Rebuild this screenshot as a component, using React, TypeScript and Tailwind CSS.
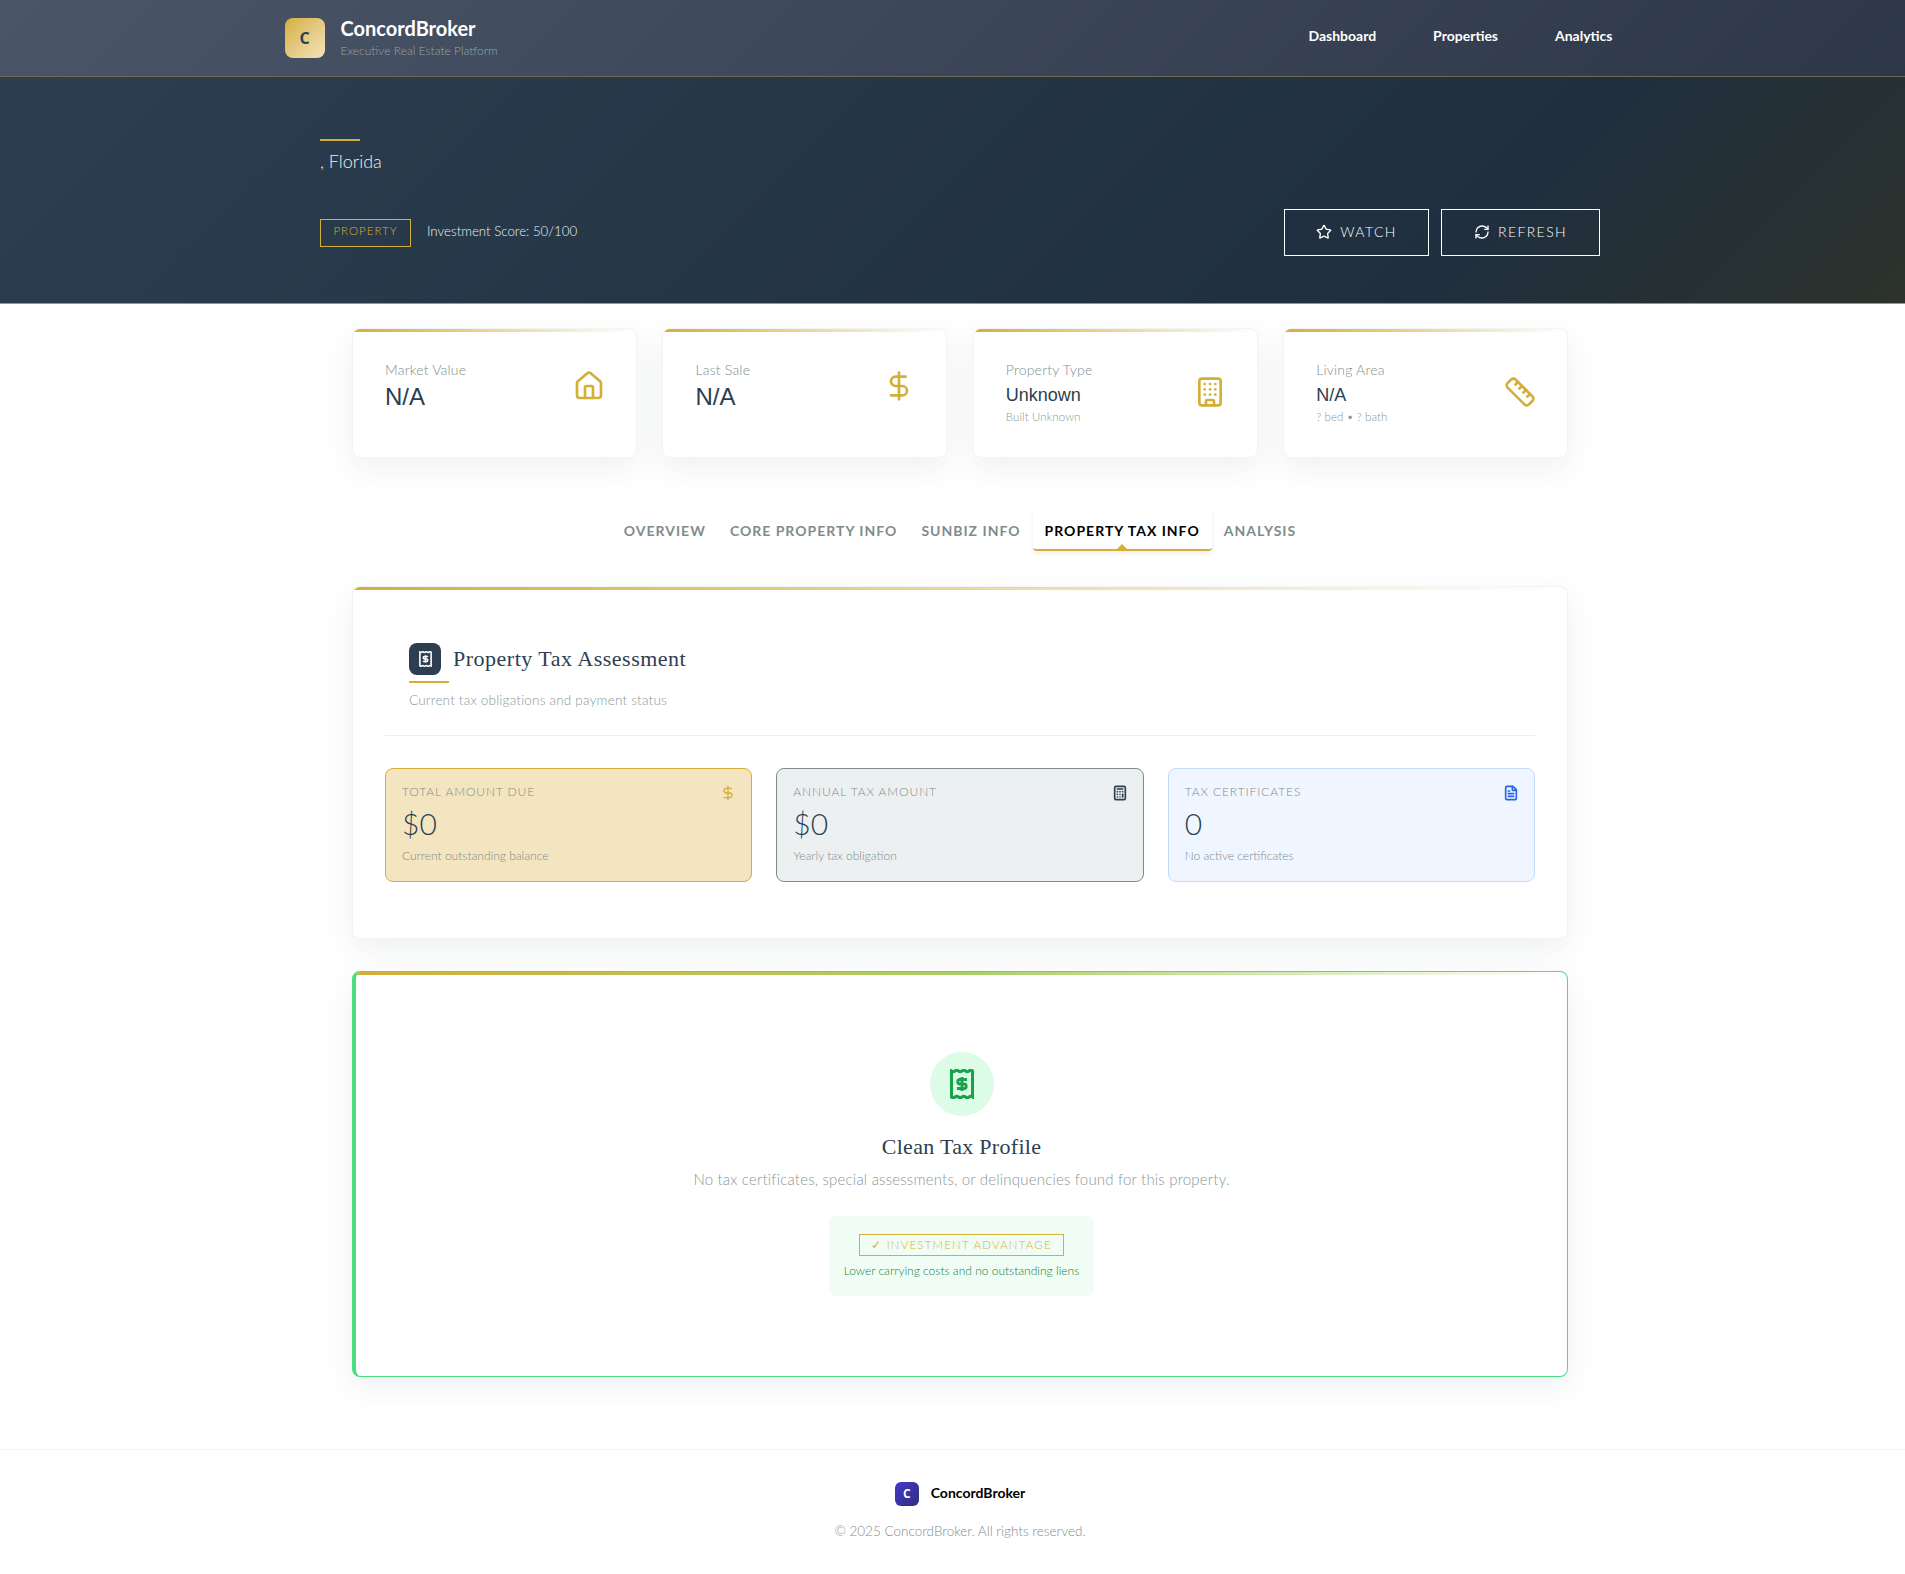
import { Building, Calculator, DollarSign, FileText, House, RefreshCw, Ruler, Star } from 'lucide-react'
import type { FC, ReactNode } from 'react'

const body = "font-['Lato',sans-serif]"
const serif = "font-['Liberation_Serif',serif]"

const ReceiptIcon: FC<{ className?: string }> = ({ className }) => (
	<svg viewBox="0 0 24 30" fill="none" stroke="currentColor" strokeWidth={3} className={className}>
		<path d="M1.5 2q1.75 1.4 3.5 0t3.5 0t3.5 0t3.5 0t3.5 0t3.5 0V28q-1.75 -1.4 -3.5 0t-3.5 0t-3.5 0t-3.5 0t-3.5 0t-3.5 0z" />
		<path d="M17 10.5h-7a2.25 2.25 0 0 0 0 4.5h4a2.25 2.25 0 0 1 0 4.5h-7M12 8v14" strokeWidth={2.8} />
	</svg>
)

interface MetricCardProps {
	label: string
	value: string
	sub?: string
	valueClass: string
	icon: ReactNode
}

const MetricCard: FC<MetricCardProps> = ({ label, value, sub, valueClass, icon }) => (
	<div className="relative h-[130px] overflow-hidden rounded-lg border border-gray-100 bg-white pt-[30px] pr-[31px] pl-[32px] shadow-[0_10px_30px_rgba(44,62,80,0.08)]">
		<div className="absolute top-0 right-0 left-0 h-[3px] bg-gradient-to-r from-[#d4af37] to-transparent" />
		<div className="flex items-center justify-between">
			<div>
				<div className={`${body} text-[14px] leading-[22px] font-light tracking-[0.2px] text-[#7f8c8d]`}>{label}</div>
				<div className={`font-['Liberation_Sans',sans-serif] font-normal text-[#2c3e50] ${valueClass}`}>{value}</div>
				{sub && (
					<div className={`${body} text-[11.5px] leading-[16px] font-light tracking-[0.1px] text-[#8a9899]`}>{sub}</div>
				)}
			</div>
			{icon}
		</div>
	</div>
)

interface StatCardProps {
	label: string
	value: string
	sub: string
	className: string
	icon: ReactNode
}

const StatCard: FC<StatCardProps> = ({ label, value, sub, className, icon }) => (
	<div className={`flex h-[114px] justify-between rounded-lg border pt-[14px] pr-[15px] pl-[16px] ${className}`}>
		<div>
			<div className={`${body} text-[12px] leading-[18px] font-light tracking-[0.9px] text-[#7f8c8d] uppercase`}>
				{label}
			</div>
			<div className={`${body} mt-[4px] text-[30px] leading-[36px] font-light text-[#2c3e50]`}>{value}</div>
			<div className={`${body} mt-[7px] text-[12px] leading-[16px] font-light text-[#7f8c8d]`}>{sub}</div>
		</div>
		<div className="mt-[2px]">{icon}</div>
	</div>
)

const tabs = ['Overview', 'Core Property Info', 'Sunbiz Info', 'Property Tax Info', 'Analysis']

export default function App() {
	return (
		<div className="h-[1574px] overflow-hidden bg-white">
			<header className="h-[77px] border-b border-[#6f6a4f] bg-[linear-gradient(135deg,#4a5568_0%,#2d3748_100%)]">
				<div className="mx-auto flex h-full w-[1400px] items-center justify-between px-[32px]">
					<div className="flex items-center gap-4">
						<div className="flex size-10 items-center justify-center rounded-lg bg-gradient-to-br from-[#d4af37] to-[#f4e4bc] text-[#2c3e50]">
							<span className="font-['Open_Sans',sans-serif] text-[16px] font-bold">C</span>
						</div>
						<div className="pb-[4px]">
							<div className={`${body} text-[20px] leading-[26px] font-bold text-white`}>ConcordBroker</div>
							<div className={`${body} mt-[3px] text-[12px] leading-[14px] font-light text-[#95a5a6]`}>
								Executive Real Estate Platform
							</div>
						</div>
					</div>
					<nav className={`${body} flex gap-[57px] pr-[8px] pb-[5px] text-[14px] font-bold text-white`}>
						<a>Dashboard</a>
						<a>Properties</a>
						<a>Analytics</a>
					</nav>
				</div>
			</header>

			<div className="w-[1920px]">
				<section className="h-[227px] border-b border-[#b8973a] bg-[linear-gradient(135deg,#2c3e50_0%,#1f2f3f_75%,#2d322b_100%)]">
					<div className="mx-auto flex h-full w-[1280px] flex-col">
						<div className="mt-[62px] h-[2px] w-10 bg-[#d4af37]" />
						<div className={`${body} mt-[8px] text-[18px] leading-[24px] font-light text-[#ecf0f1]`}>, Florida</div>
						<div className="mt-[36px] flex items-center justify-between">
							<div className="flex items-center gap-4">
								<span
									className={`${body} flex h-[28px] w-[91px] items-center justify-center border border-[#d4af37] pb-[3px] text-[11.5px] font-light tracking-[1px] text-[#d4af37]`}
								>
									PROPERTY
								</span>
								<span className={`${body} pb-[2px] text-[13.3px] font-light text-[#ecf0f1]`}>
									Investment Score: 50/100
								</span>
							</div>
							<div className="flex gap-3">
								<button
									type="button"
									className={`${body} flex h-[47px] w-[145px] items-center justify-center gap-2 border border-white pb-[2px] text-[14px] font-light tracking-[1.4px] text-white`}
								>
									<Star className="size-4" />
									WATCH
								</button>
								<button
									type="button"
									className={`${body} flex h-[47px] w-[159px] items-center justify-center gap-2 border border-white pb-[2px] text-[14px] font-light tracking-[1.4px] text-white`}
								>
									<RefreshCw className="size-4" />
									REFRESH
								</button>
							</div>
						</div>
					</div>
				</section>

				<main className="mx-auto w-[1216px]">
					<div className="mt-[24px] grid grid-cols-4 gap-[25.6px]">
						<MetricCard
							label="Market Value"
							value="N/A"
							valueClass="text-[24px] leading-[32px]"
							icon={<House className="size-8 text-[#d4af37]" />}
						/>
						<MetricCard
							label="Last Sale"
							value="N/A"
							valueClass="text-[24px] leading-[32px]"
							icon={<DollarSign className="size-8 text-[#d4af37]" />}
						/>
						<MetricCard
							label="Property Type"
							value="Unknown"
							sub="Built Unknown"
							valueClass="text-[18px] leading-[28px]"
							icon={<Building className="size-8 text-[#d4af37]" />}
						/>
						<MetricCard
							label="Living Area"
							value="N/A"
							sub="? bed • ? bath"
							valueClass="text-[18px] leading-[28px]"
							icon={<Ruler className="size-8 text-[#d4af37]" />}
						/>
					</div>

					<nav className="mt-[52px] flex h-[41px] justify-center">
						{tabs.map(tab => {
							const active = tab === 'Property Tax Info'
							return (
								<div
									key={tab}
									className={
										active
											? `${body} relative flex items-center rounded-sm border-b-2 border-[#d4af37] bg-white px-3 pt-[2px] text-[14px] font-bold tracking-[1px] text-black uppercase shadow-[0_2px_4px_rgba(0,0,0,0.08)]`
											: `${body} flex items-center px-3 text-[14px] font-bold tracking-[1px] text-[#7f8c8d] uppercase`
									}
								>
									{tab}
									{active && (
										<span className="absolute bottom-0 left-1/2 size-0 -translate-x-1/2 border-x-[5px] border-b-[5px] border-x-transparent border-b-[#d4af37]" />
									)}
								</div>
							)
						})}
					</nav>

					<section className="relative mt-[35px] h-[353px] overflow-hidden rounded-lg border border-gray-100 bg-white px-[32px] pt-[56px] shadow-[0_10px_30px_rgba(44,62,80,0.08)]">
						<div className="absolute top-0 right-0 left-0 h-[3px] bg-gradient-to-r from-[#d4af37] to-transparent" />
						<div className="h-[93px] border-b border-[#ecf0f1] pl-[24px]">
							<div className="relative flex h-[32px] items-center gap-3">
								<div className="flex size-8 items-center justify-center rounded-lg bg-[#2c3e50] text-white">
									<ReceiptIcon className="h-[16px] w-[13px]" />
								</div>
								<h2 className={`${serif} pb-[1px] text-[22px] tracking-[0.5px] text-[#2c3e50]`}>
									Property Tax Assessment
								</h2>
								<div className="absolute top-[38px] left-0 h-[2px] w-10 bg-[#d4af37]" />
							</div>
							<p className={`${body} mt-[16px] text-[13.5px] leading-[18px] font-light tracking-[0.2px] text-[#8a9899]`}>
								Current tax obligations and payment status
							</p>
						</div>
						<div className="mt-[32px] grid grid-cols-3 gap-[24px]">
							<StatCard
								label="Total Amount Due"
								value="$0"
								sub="Current outstanding balance"
								className="border-[#d4af37] bg-[#f3e5bf]"
								icon={<DollarSign className="size-4 text-[#d4af37]" />}
							/>
							<StatCard
								label="Annual Tax Amount"
								value="$0"
								sub="Yearly tax obligation"
								className="border-[#7f8c8d] bg-[#ecf0f1]"
								icon={<Calculator className="size-4 text-[#2c3e50]" strokeWidth={2.5} />}
							/>
							<StatCard
								label="Tax Certificates"
								value="0"
								sub="No active certificates"
								className="border-[#bfdbfe] bg-[#eff6ff]"
								icon={<FileText className="size-4 text-[#2563eb]" strokeWidth={2.5} />}
							/>
						</div>
					</section>

					<section className="relative mt-[32px] h-[406px] overflow-hidden rounded-lg border border-l-4 border-[#4ade80] bg-white pt-[80px] shadow-[0_10px_30px_rgba(44,62,80,0.08)]">
						<div className="absolute top-0 right-0 left-0 h-[3px] bg-gradient-to-r from-[#d4af37] via-[#a9cf62] to-transparent" />
						<div className="flex flex-col items-center">
							<div className="flex size-16 items-center justify-center rounded-full bg-[#dcfce7]">
								<ReceiptIcon className="h-[30px] w-[24px] text-[#16a34a]" />
							</div>
							<h3 className={`${serif} mt-[16px] text-[22px] leading-[30px] tracking-[0.3px] text-[#2c3e50]`}>
								Clean Tax Profile
							</h3>
							<p className={`${body} mt-[6px] text-[15px] leading-[22px] font-light tracking-[0.2px] text-[#8a9899]`}>
								No tax certificates, special assessments, or delinquencies found for this property.
							</p>
							<div className="mt-[26px] flex h-[80px] w-[265px] flex-col items-center rounded-lg bg-[#f0fdf4] pt-[18px]">
								<span
									className={`${body} flex h-[22px] w-[205px] items-center justify-center border border-[#d4af37] text-[11.5px] font-light tracking-[1.2px] text-[#d4af37]`}
								>
									✓ INVESTMENT ADVANTAGE
								</span>
								<span className={`${body} mt-[7px] text-[12px] leading-[16px] font-light text-[#15803d]`}>
									Lower carrying costs and no outstanding liens
								</span>
							</div>
						</div>
					</section>
				</main>

				<footer className="mt-[72px] flex h-[124px] flex-col items-center border-t border-gray-100 pt-[32px]">
					<div className="flex items-center gap-3">
						<div className="flex size-6 items-center justify-center rounded-md bg-gradient-to-br from-[#4338ca] to-[#312e81] text-white">
							<span className="font-['Open_Sans',sans-serif] text-[12px] font-bold">C</span>
						</div>
						<span className={`${body} pb-[3px] text-[14px] font-bold text-black`}>ConcordBroker</span>
					</div>
					<p className={`${body} mt-[15px] text-[13.5px] leading-[20px] font-light text-[#7f8c8d]`}>
						© 2025 ConcordBroker. All rights reserved.
					</p>
				</footer>
			</div>
		</div>
	)
}
